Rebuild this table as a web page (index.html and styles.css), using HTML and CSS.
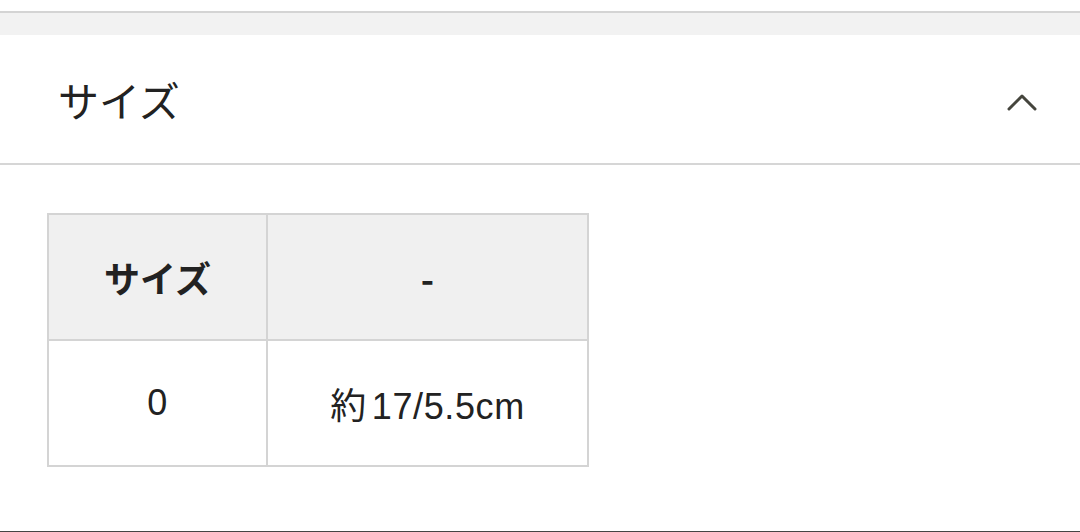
FILE: index.html
```html
<!DOCTYPE html>
<html lang="ja">
<head>
    <meta charset="UTF-8">
    <meta name="viewport" content="width=device-width, initial-scale=1.0">
    <title>サイズ</title>
    <link rel="stylesheet" href="styles.css">
</head>
<body>

<!-- 上の区切り -->
<div class="top-space"></div>
<div class="divider-band"></div>

<!-- サイズ アコーディオン -->
<section class="accordion">
    <div class="accordion-head">
        <h2 class="accordion-title">サイズ</h2>
        <svg class="chevron" width="32" height="22" viewBox="0 0 32 22">
            <polyline points="3,19 16,6 29,19" fill="none" stroke="#45453d" stroke-width="3" stroke-linecap="round" stroke-linejoin="round"/>
        </svg>
    </div>

    <div class="accordion-body">
        <table class="size-table">
            <thead>
                <tr>
                    <th class="col-size">サイズ</th>
                    <th class="col-value">-</th>
                </tr>
            </thead>
            <tbody>
                <tr>
                    <td>0</td>
                    <td><span class="approx">約</span>17/5.5cm</td>
                </tr>
            </tbody>
        </table>
    </div>
</section>

<div class="bottom-line"></div>

</body>
</html>
```

FILE: styles.css
```css
/* 全体 */
body {
    margin: 0;
    padding: 0;
    background: #fff;
    color: #222;
    font-family: "Noto Sans CJK JP", "Noto Sans", sans-serif;
}

.top-space {
    height: 11px;
}

.divider-band {
    height: 22px;
    background-color: #f2f2f2;
    border-top: 2px solid #d4d4d4;
}

/* アコーディオン見出し */
.accordion-head {
    display: flex;
    align-items: center;
    justify-content: space-between;
    height: 128px;
    padding: 0 42px 0 58px;
    border-bottom: 2px solid #d6d6d6;
}

.accordion-title {
    margin: 0;
    font-size: 41px;
    font-weight: 400;
    color: #222;
}

.chevron {
    display: block;
    margin-top: 4px;
}

/* 中身 */
.accordion-body {
    padding: 48px 0 0 47px;
    height: 366px;
    box-sizing: border-box;
}

.size-table {
    border-collapse: collapse;
    border: 2px solid #d4d4d4;
}

.size-table th,
.size-table td {
    border: 2px solid #d4d4d4;
    height: 124px;
    padding: 0;
    text-align: center;
    vertical-align: middle;
    font-size: 36px;
}

.size-table th {
    background-color: #f0f0f0;
    font-weight: 700;
}

.size-table td {
    font-family: "Liberation Sans", "Noto Sans CJK JP", sans-serif;
    letter-spacing: 0.6px;
}

.approx {
    margin-right: 5px;
}

.col-size {
    width: 217px;
}

.col-value {
    width: 319px;
}

.bottom-line {
    height: 1px;
    background-color: #444;
}
```
